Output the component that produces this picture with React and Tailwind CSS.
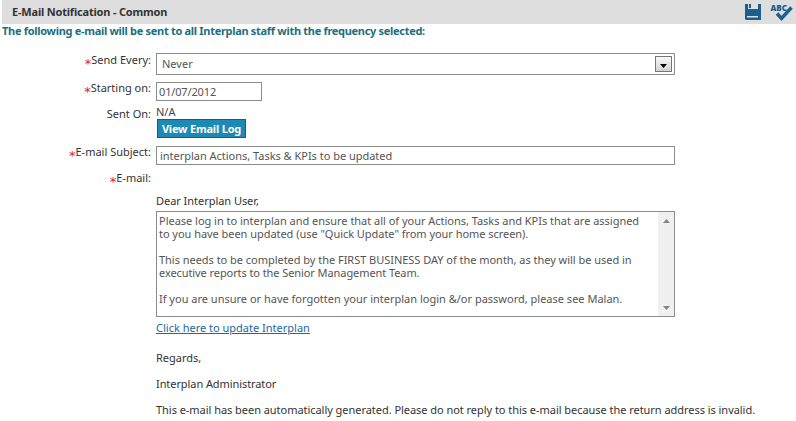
function Label({ text, required, className = "" }) {
  return (
    <div className={`flex w-[151px] shrink-0 justify-end whitespace-nowrap text-[#333] ${className}`}>
      {required && (
        <span className="pt-[5px] font-['DejaVu_Sans',sans-serif] text-[13px] leading-[12px] text-[#e0202c]">*</span>
      )}
      <span>{text}</span>
    </div>
  );
}

function SaveIcon() {
  return (
    <svg width="16" height="16" viewBox="0 0 16 16" fill="#1b5f8c">
      <path d="M0 0H16V16H1L0 15Z" />
      <path d="M3 0H13V5H3Z" fill="#dedede" />
      <path d="M4 0H6V4H4Z" />
      <path d="M2 12H13V13.5H2Z" fill="#dedede" />
    </svg>
  );
}

function SpellIcon() {
  return (
    <svg width="24" height="20" viewBox="0 0 24 20">
      <path d="M7 10.5 L11.5 15.5 L21.5 4.5" fill="none" stroke="#1b5f8c" strokeWidth="3.4" />
      <text x="0.5" y="8" fontSize="9" fontWeight="800" fontFamily="Open Sans, sans-serif" fill="#1b5f8c" textLength="16.5" lengthAdjust="spacingAndGlyphs">ABC</text>
    </svg>
  );
}

export default function App() {
  return (
    <div className="h-[421px] w-[796px] overflow-hidden bg-white font-['Noto_Sans',sans-serif] text-[11px] leading-[13px] text-[#333]">
      <header className="ml-[2px] flex h-6 items-start justify-between bg-[#dedede] pl-[10px] text-[#333]">
        <h1 className="pt-[5px] font-bold tracking-[-0.19px]">E-Mail Notification - Common</h1>
        <div className="flex">
          <div className="mt-1 mr-[9px]"><SaveIcon /></div>
          <div className="mt-[3px] mr-[2px]"><SpellIcon /></div>
        </div>
      </header>
      <p className="h-[29px] pl-[2px] font-bold tracking-[-0.3px] text-[#216f80]">The following e-mail will be sent to all Interplan staff with the frequency selected:</p>
      <div className="flex h-[29px] gap-[5px]">
        <Label text="Send Every:" required />
        <div className="flex h-[22px] w-[519px] items-center justify-between border border-[#8c8c8c] pl-[5px] pr-[2px] text-[#555]">
          <span className="pb-[2px]">Never</span>
          <div className="flex h-4 w-[17px] items-end justify-center border border-[#777] bg-linear-to-b from-[#fafafa] to-[#d2d2d2] pb-[3px]">
            <svg width="7" height="4" viewBox="0 0 7 4"><path d="M0 0H7L3.5 4Z" fill="#000" /></svg>
          </div>
        </div>
      </div>
      <div className="flex h-6 gap-[5px]">
        <Label text="Starting on:" required className="-mt-px" />
        <div className="flex h-[19px] w-[106px] items-center border border-[#8c8c8c] pl-[2px] tracking-[-0.15px] text-[#555]">01/07/2012</div>
      </div>
      <div className="flex h-10 gap-[5px]">
        <Label text="Sent On:" className="pt-[1px]" />
        <div>
          <div className="-mt-px h-[14px] text-[#444]">N/A</div>
          <button className="ml-[1px] flex h-[19px] w-[89px] items-center justify-center whitespace-nowrap border border-[#125f77] bg-[#1c8ab4] font-bold tracking-[-0.2px] text-white">View Email Log</button>
        </div>
      </div>
      <div className="flex h-[26px] gap-[5px]">
        <Label text="E-mail Subject:" required className="-mt-px" />
        <div className="flex h-[19px] w-[519px] items-center border border-[#8c8c8c] pl-[3px] tracking-[-0.02px] text-[#555]">interplan Actions, Tasks &amp; KPIs to be updated</div>
      </div>
      <div className="flex h-[22px] gap-[5px]">
        <Label text="E-mail:" required className="-mt-px" />
      </div>
      <main className="ml-[156px] whitespace-nowrap">
        <p className="h-[17px] tracking-[-0.04px]">Dear Interplan User,</p>
        <div className="flex h-[106px] w-[519px] justify-between border border-[#8c8c8c] pl-[2px] text-[#555]">
          <div className="pt-[2px]">
            <p className="tracking-[-0.02px]">Please log in to interplan and ensure that all of your Actions, Tasks and KPIs that are assigned</p>
            <p className="tracking-[-0.04px]">to you have been updated (use "Quick Update" from your home screen).</p>
            <p className="mt-[13px] tracking-[-0.03px]">This needs to be completed by the FIRST BUSINESS DAY of the month, as they will be used in</p>
            <p className="tracking-[-0.08px]">executive reports to the Senior Management Team.</p>
            <p className="mt-[13px]">If you are unsure or have forgotten your interplan login &amp;/or password, please see Malan.</p>
          </div>
          <div className="flex w-4 flex-col items-center justify-between bg-[#f0f0f0] pt-[7px] pb-[6px]">
            <svg width="7" height="4" viewBox="0 0 7 4"><path d="M0 4H7L3.5 0Z" fill="#858585" /></svg>
            <svg width="7" height="4" viewBox="0 0 7 4"><path d="M0 0H7L3.5 4Z" fill="#858585" /></svg>
          </div>
        </div>
        <a className="mt-[4px] block text-[#1b66a5] underline">Click here to update Interplan</a>
        <p className="mt-[17px]">Regards,</p>
        <p className="mt-[13px] tracking-[-0.08px]">Interplan Administrator</p>
        <p className="mt-[13px] tracking-[-0.04px]">This e-mail has been automatically generated. Please do not reply to this e-mail because the return address is invalid.</p>
      </main>
    </div>
  );
}
